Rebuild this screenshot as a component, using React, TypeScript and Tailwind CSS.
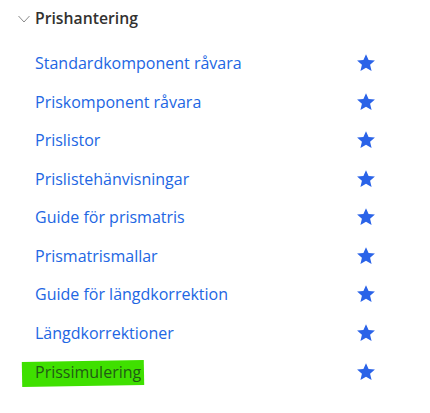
const items = [
  'Standardkomponent råvara',
  'Priskomponent råvara',
  'Prislistor',
  'Prislistehänvisningar',
  'Guide för prismatris',
  'Prismatrismallar',
  'Guide för längdkorrektion',
  'Längdkorrektioner',
];

function Star() {
  return (
    <svg viewBox="0 0 24 24" className="w-[20px] h-[20px]" fill="#2a63e8">
      <path d="M12 1.4l3.1 7.1 7.6.6-5.8 5 1.8 7.5L12 17.7l-6.7 3.9 1.8-7.5-5.8-5 7.6-.6z" />
    </svg>
  );
}

export default function App() {
  return (
    <div
      className="w-[430px] h-[413px] bg-white overflow-hidden"
      style={{ fontFamily: '"Open Sans", "Noto Sans", sans-serif' }}
    >
      {/* Group header */}
      <div className="flex items-center h-[38px] pl-[18px]">
        <svg viewBox="0 0 12 8" className="w-[12px] h-[8px] mr-[5px]" fill="none" stroke="#8a8a8a" strokeWidth="1">
          <path d="M0.5 1l5.5 6 5.5-6" />
        </svg>
        <span className="text-[15.75px] font-semibold text-[#323130]">Prishantering</span>
      </div>

      {/* Links */}
      <ul className="mt-[6px] pl-[35px] pr-[54px]">
        {items.map((label) => (
          <li key={label} className="flex items-center justify-between h-[38.5px]">
            <span className="text-[16px] text-[#2266e3]">{label}</span>
            <Star />
          </li>
        ))}
        <li className="flex items-center justify-between h-[38.5px] mt-[1px]">
          <span className="relative text-[16px] text-[#1f5c14]">
            <span className="absolute left-[-13px] right-[-3px] top-[1px] bottom-[-2px] bg-[#3fe000] -rotate-[1deg]" />
            <span className="relative">Prissimulering</span>
          </span>
          <Star />
        </li>
      </ul>
    </div>
  );
}
